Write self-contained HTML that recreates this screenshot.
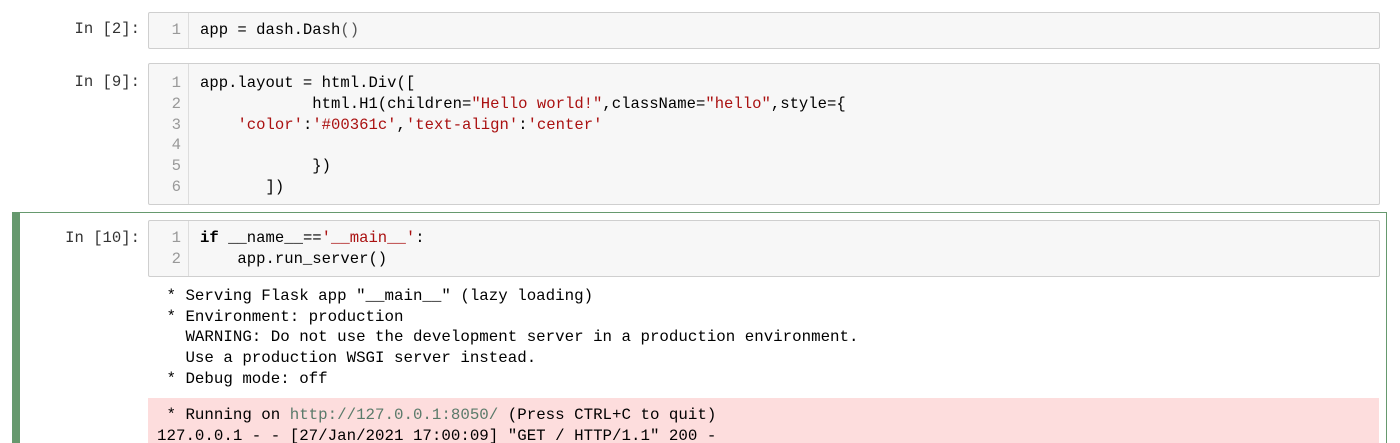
<!DOCTYPE html>
<html style="overflow:hidden;height:443px"><head><style>
body{margin:0;width:1400px;height:443px;background:#fff;overflow:hidden;position:relative;font-family:"Liberation Mono",monospace;font-size:15.6px;color:#000}
.p{position:absolute;right:1260px;color:#333;white-space:pre}
.box{position:absolute;left:148px;width:1230px;background:#f7f7f7;border:1px solid #cfcfcf;border-radius:2px}
.g{position:absolute;left:0;top:0;bottom:0;width:39px;border-right:1px solid #ddd}
.l{position:absolute;white-space:pre;line-height:21px}
.n{position:absolute;width:32px;text-align:right;color:#999;line-height:21px}
.s{color:#a11}
.k{font-weight:bold;color:#000}
.b{color:#555}
</style></head><body>
<div class="p" style="top:20px">In [2]:</div>
<div class="box" style="top:12px;height:35px"><div class="g"></div>
<div class="n" style="top:7px">1</div><div class="l" style="left:51px;top:7px">app = dash.Dash<span class="b">()</span></div></div>

<div class="p" style="top:73px">In [9]:</div>
<div class="box" style="top:63px;height:140px"><div class="g"></div>
<div class="n" style="top:9px;line-height:20.8px">1<br>2<br>3<br>4<br>5<br>6</div>
<div class="l" style="left:51px;top:9px;line-height:20.8px">app.layout = html.Div([
            html.H1(children=<span class="s">"Hello world!"</span>,className=<span class="s">"hello"</span>,style={
    <span class="s">'color'</span>:<span class="s">'#00361c'</span>,<span class="s">'text-align'</span>:<span class="s">'center'</span>

            })
       ])</div></div>

<div style="position:absolute;left:12px;top:212px;width:1366px;height:231px;border:1px solid #66996e;border-bottom:none;border-left:8px solid #66996e"></div>
<div class="p" style="top:229px">In [10]:</div>
<div class="box" style="top:220px;height:55px"><div class="g"></div>
<div class="n" style="top:7px;line-height:20.5px">1<br>2</div>
<div class="l" style="left:51px;top:7px;line-height:20.5px"><span class="k">if</span> __name__==<span class="s">'__main__'</span>:
    app.run_server()</div></div>

<div class="l" style="left:157px;top:286px;line-height:20.7px;font-size:15.8px"> * Serving Flask app "__main__" (lazy loading)
 * Environment: production
   WARNING: Do not use the development server in a production environment.
   Use a production WSGI server instead.
 * Debug mode: off</div>
<div style="position:absolute;left:148px;top:398px;width:1231px;height:45px;background:#fddddd"></div>
<div class="l" style="left:157px;top:405px;line-height:21px;font-size:15.8px"> * Running on <span style="color:#5a7a6a">http://127.0.0.1:8050/</span> (Press CTRL+C to quit)
127.0.0.1 - - [27/Jan/2021 17:00:09] "GET / HTTP/1.1" 200 -</div>
</body></html>
